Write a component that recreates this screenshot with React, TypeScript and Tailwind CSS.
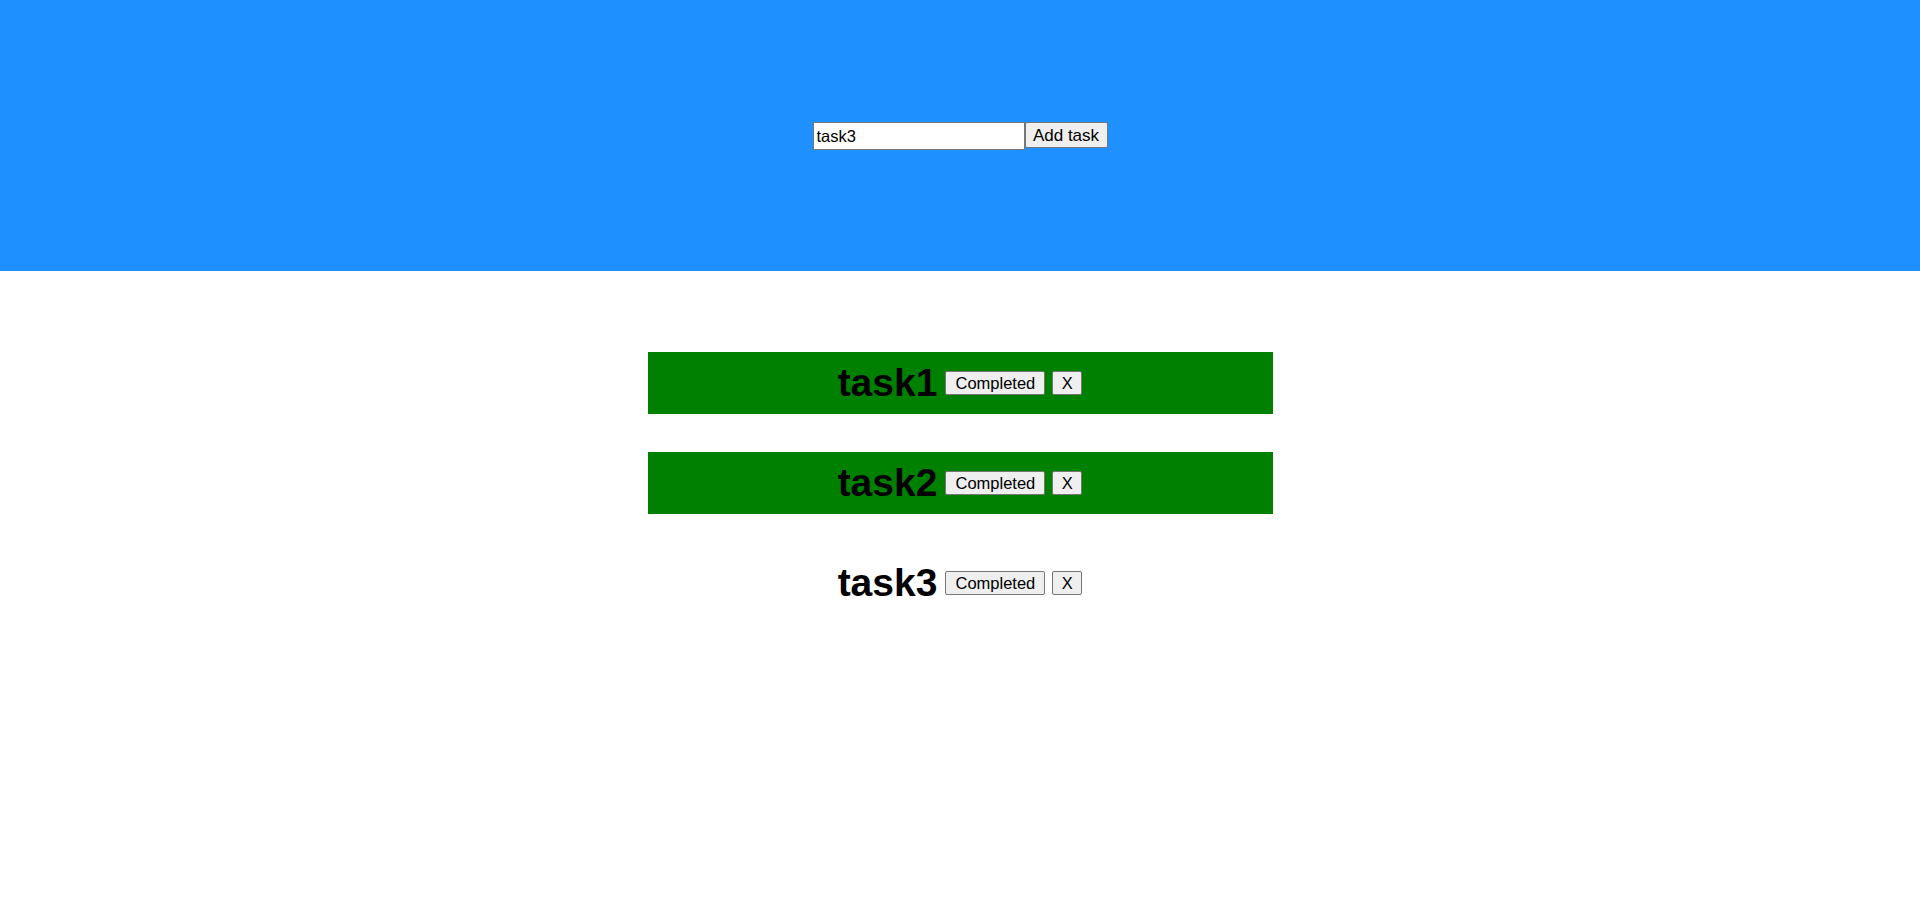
import { useState } from "react";

type Task = { id: number; name: string; completed: boolean };

const initialTasks: Task[] = [
  { id: 1, name: "task1", completed: true },
  { id: 2, name: "task2", completed: true },
  { id: 3, name: "task3", completed: false },
];

export default function App() {
  const [tasks, setTasks] = useState<Task[]>(initialTasks);
  const [text, setText] = useState("task3");

  const addTask = () => {
    if (!text) return;
    setTasks([...tasks, { id: Date.now(), name: text, completed: false }]);
  };

  const toggle = (id: number) =>
    setTasks(tasks.map((t) => (t.id === id ? { ...t, completed: !t.completed } : t)));

  const remove = (id: number) => setTasks(tasks.filter((t) => t.id !== id));

  return (
    <div className="min-h-[900px] bg-white font-['Liberation_Sans',Arial,sans-serif] text-black">
      <div className="flex h-[271px] justify-center bg-[#1e90ff] pt-[122px]">
        <div className="flex items-start">
          <input
            type="text"
            value={text}
            onChange={(e) => setText(e.target.value)}
            className="h-[28px] w-[212px] border border-[#767676] bg-white px-[3px] text-[16.5px] text-black outline-none"
          />
          <button
            type="button"
            onClick={addTask}
            className="h-[26px] w-[83px] rounded-[2px] border border-[#767676] bg-[#efefef] text-[17px] leading-none text-black"
          >
            Add task
          </button>
        </div>
      </div>

      <div className="flex flex-col items-center gap-[38px] pt-[81px]">
        {tasks.map((task) => (
          <div
            key={task.id}
            className={`flex h-[62px] w-[625px] items-center justify-center ${
              task.completed ? "bg-[#008000]" : ""
            }`}
          >
            <h1 className="text-[39px] font-bold leading-[46px]">{task.name}</h1>
            <button
              type="button"
              onClick={() => toggle(task.id)}
              className="ml-[8px] h-[24px] w-[100px] rounded-[2px] border border-[#767676] bg-[#efefef] text-[16.5px] leading-none text-black"
            >
              Completed
            </button>
            <button
              type="button"
              onClick={() => remove(task.id)}
              className="ml-[7px] h-[24px] w-[30px] rounded-[2px] border border-[#767676] bg-[#efefef] text-[16.5px] leading-none text-black"
            >
              X
            </button>
          </div>
        ))}
      </div>
    </div>
  );
}
